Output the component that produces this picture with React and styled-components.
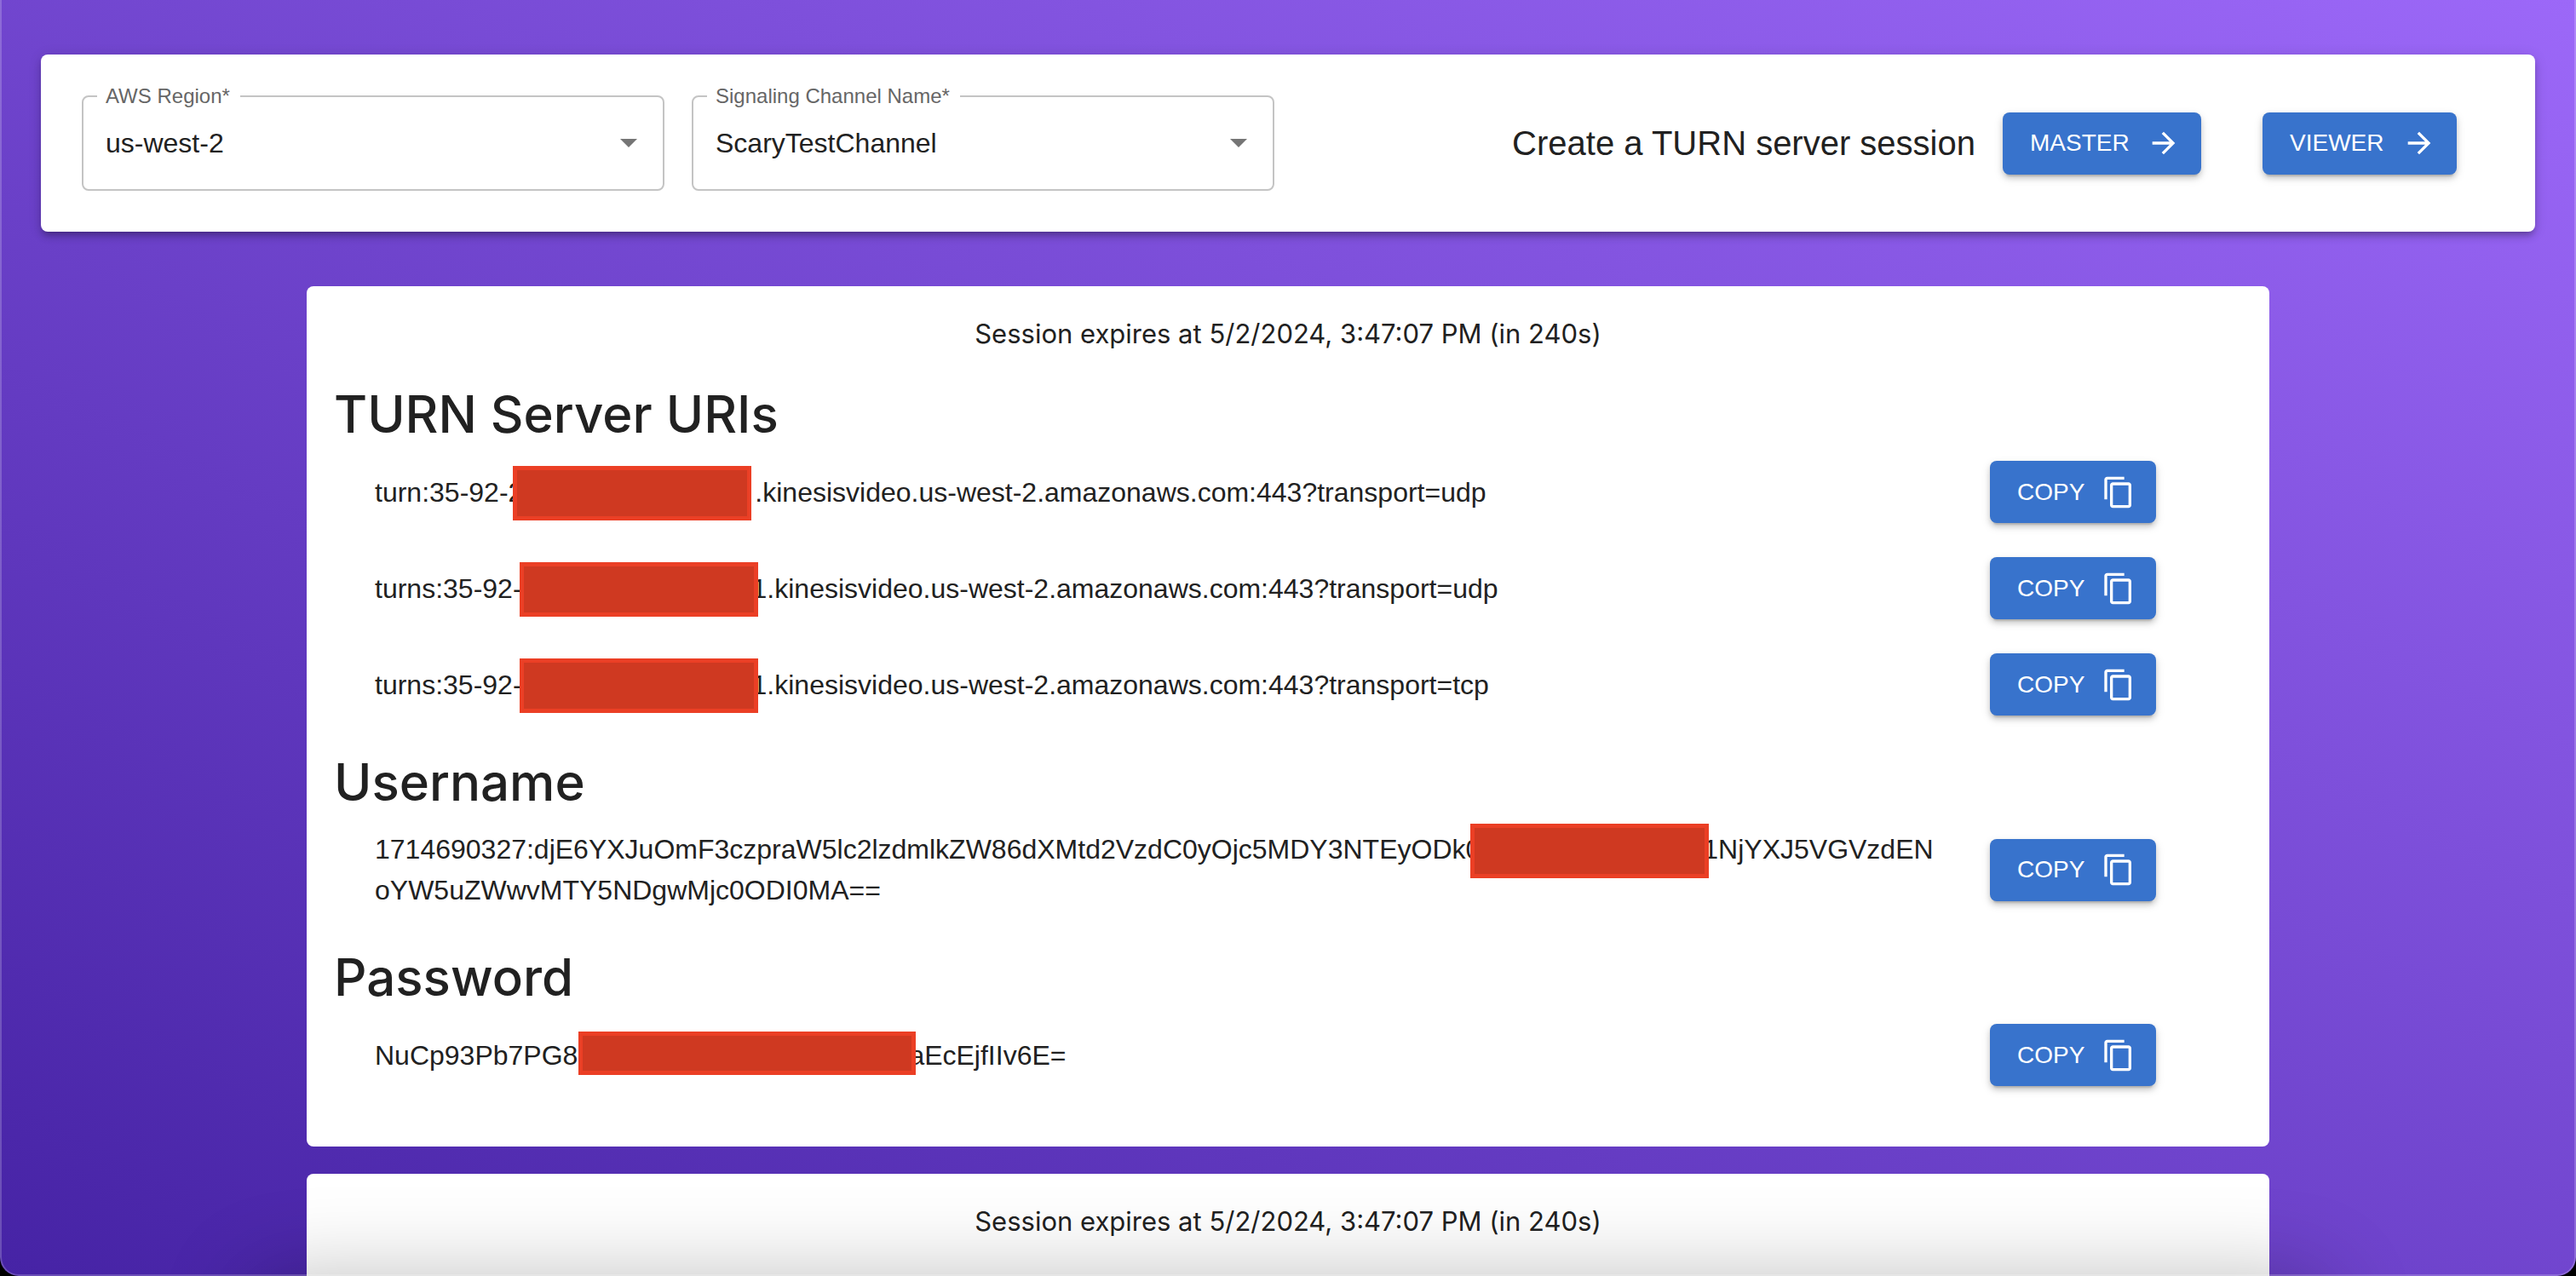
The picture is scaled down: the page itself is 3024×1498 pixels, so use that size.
import React from "react";
import styled, { createGlobalStyle } from "styled-components";
import { MdArrowForward, MdContentCopy } from "react-icons/md";

const helvetica = `"Liberation Sans", Arial, Helvetica, sans-serif`;
const system = `Inter, "Liberation Sans", sans-serif`;

const GlobalStyle = createGlobalStyle`
  *, *::before, *::after { box-sizing: border-box; }
  body {
    margin: 0;
    background: #000;
    color: #212121;
    font-family: ${helvetica};
    font-size: 32px;
    line-height: 48px;
  }
`;

const Window = styled.div`
  position: relative;
  display: flex;
  flex-direction: column;
  height: 100vh;
  overflow: hidden;
  padding: 64px 48px 0;
  border-radius: 0 0 22px 22px;
  background: linear-gradient(to top right, #4623a5, #9c68f8);

  &::after {
    content: "";
    position: absolute;
    inset: 0;
    border: 2px solid rgba(255, 255, 255, 0.2);
    border-top: 0;
    border-radius: inherit;
    pointer-events: none;
  }
`;

const DockShadow = styled.div`
  position: absolute;
  top: 100%;
  left: 290px;
  right: 290px;
  height: 120px;
  border-radius: 40px;
  box-shadow: 0 0 100px rgba(0, 0, 0, 0.25);
  pointer-events: none;
`;

const Toolbar = styled.header`
  flex: none;
  display: grid;
  grid-template-columns: repeat(4, 1fr);
  align-items: center;
  gap: 32px;
  padding: 48px;
  border-radius: 8px;
  background: #fff;
  box-shadow: 0 6px 6px -4px rgba(0, 0, 0, 0.2), 0 6px 8px rgba(0, 0, 0, 0.14),
    0 2px 16px rgba(0, 0, 0, 0.12);
`;

const Field = styled.div`
  position: relative;
  display: flex;
  align-items: center;
  height: 112px;
  border: 2px solid #c4c4c4;
  border-radius: 8px;
`;

const FieldLabel = styled.label`
  position: absolute;
  top: -2px;
  left: 16px;
  padding: 0 12px 0 10px;
  background: #fff;
  color: #666;
  font-size: 24px;
  line-height: 2px;
`;

const Select = styled.select`
  width: 100%;
  height: 100%;
  padding: 0 64px 0 26px;
  border: 0;
  background: transparent;
  color: inherit;
  font: inherit;
  appearance: none;
  outline: none;
`;

const Caret = styled.span`
  position: absolute;
  right: 30px;
  border: 10px solid transparent;
  border-top-color: #757575;
  border-bottom: 0;
  pointer-events: none;
`;

const Actions = styled.div`
  grid-column: span 2;
  display: flex;
  align-items: center;
  justify-content: flex-end;
  gap: 72px;
  padding-right: 44px;
`;

const Prompt = styled.div`
  display: flex;
  align-items: center;
  gap: 32px;
  font-size: 40px;
  white-space: nowrap;
`;

const Button = styled.button`
  display: inline-flex;
  align-items: center;
  justify-content: space-between;
  min-width: ${(p) => p.$width || 195}px;
  height: 73px;
  padding: 0 24px 0 32px;
  gap: 16px;
  border: 0;
  border-radius: 8px;
  background: #3873cc;
  color: #fff;
  font-family: inherit;
  font-size: 28px;
  text-transform: uppercase;
  box-shadow: 0 6px 2px -4px rgba(0, 0, 0, 0.14), 0 4px 6px rgba(0, 0, 0, 0.14),
    0 4px 12px rgba(0, 0, 0, 0.12);
  cursor: pointer;

  svg {
    flex: none;
    width: 40px;
    height: 40px;
  }
`;

const Sessions = styled.main`
  flex: 1;
  display: flex;
  flex-direction: column;
  gap: 32px;
  width: 100%;
  max-width: 2304px;
  margin: 64px auto 0;
`;

const Card = styled.section`
  flex: ${(p) => (p.$fill ? "1 0 auto" : "none")};
  padding: 32px 32px 51px;
  border-radius: ${(p) => (p.$fill ? "8px 8px 0 0" : "8px")};
  background: #fff;
`;

const Expiry = styled.p`
  margin: 0 0 12px;
  font-family: ${system};
  font-size: 31px;
  text-align: center;
`;

const Heading = styled.h2`
  margin: 0;
  padding-top: 24px;
  font-family: ${system};
  font-size: 60px;
  font-weight: 500;
  line-height: 69px;
`;

const Row = styled.div`
  display: flex;
  align-items: center;
  padding: 20px 0;
`;

const Value = styled.div`
  flex: 1;
  min-width: 0;
  padding: 0 52px 0 48px;
  word-break: break-all;
`;

const RowAction = styled.div`
  flex: none;
  display: flex;
  width: 296px;
`;

const Redacted = styled.span`
  position: relative;
  z-index: 1;
  display: inline-block;
  width: ${(p) => (p.$long ? 396 : 280)}px;
  height: ${(p) => (p.$long ? 51 : 64)}px;
  margin: ${(p) => (p.$long ? -17 : -13)}px ${(p) => p.$after}px
    ${(p) => (p.$long ? -7 : -11)}px ${(p) => p.$before}px;
  border: 5px solid #eb3f25;
  background: #cf3921;
  vertical-align: middle;
`;

function SelectField({ id, label, value }) {
  return (
    <Field>
      <FieldLabel htmlFor={id}>{label}</FieldLabel>
      <Select id={id} defaultValue={value}>
        <option value={value}>{value}</option>
      </Select>
      <Caret />
    </Field>
  );
}

function CopyRow({ children }) {
  return (
    <Row>
      <Value>{children}</Value>
      <RowAction>
        <Button type="button">
          Copy
          <MdContentCopy />
        </Button>
      </RowAction>
    </Row>
  );
}

function SessionCard({ expires, fill, children }) {
  return (
    <Card $fill={fill}>
      <Expiry>Session expires at {expires}</Expiry>
      {children}
    </Card>
  );
}

export default function App() {
  const expires = "5/2/2024, 3:47:07 PM (in 240s)";
  return (
    <>
      <GlobalStyle />
      <Window>
        <Toolbar>
          <SelectField id="region" label="AWS Region*" value="us-west-2" />
          <SelectField
            id="channel"
            label="Signaling Channel Name*"
            value="ScaryTestChannel"
          />
          <Actions>
            <Prompt>
              Create a TURN server session
              <Button type="button" $width={233}>
                Master
                <MdArrowForward />
              </Button>
            </Prompt>
            <Button type="button" $width={228}>
              Viewer
              <MdArrowForward />
            </Button>
          </Actions>
        </Toolbar>
        <Sessions>
          <SessionCard expires={expires}>
            <Heading>TURN Server URIs</Heading>
            <CopyRow>
              turn:35-92-2
              <Redacted $before={-12} $after={4} />
              .kinesisvideo.us-west-2.amazonaws.com:443?transport=udp
            </CopyRow>
            <CopyRow>
              turns:35-92-
              <Redacted $before={-3} $after={-7} />
              1.kinesisvideo.us-west-2.amazonaws.com:443?transport=udp
            </CopyRow>
            <CopyRow>
              turns:35-92-
              <Redacted $before={-3} $after={-7} />
              1.kinesisvideo.us-west-2.amazonaws.com:443?transport=tcp
            </CopyRow>
            <Heading>Username</Heading>
            <CopyRow>
              1714690327:djE6YXJuOmF3czpraW5lc2lzdmlkZW86dXMtd2VzdC0yOjc5MDY3NTEyODk0
              <Redacted $before={-12} $after={-7} />
              1NjYXJ5VGVzdENoYW5uZWwvMTY5NDgwMjc0ODI0MA==
            </CopyRow>
            <Heading>Password</Heading>
            <CopyRow>
              NuCp93Pb7PG8
              <Redacted $long $before={1} $after={-8} />
              aEcEjfIIv6E=
            </CopyRow>
          </SessionCard>
          <SessionCard expires={expires} fill />
        </Sessions>
        <DockShadow />
      </Window>
    </>
  );
}
